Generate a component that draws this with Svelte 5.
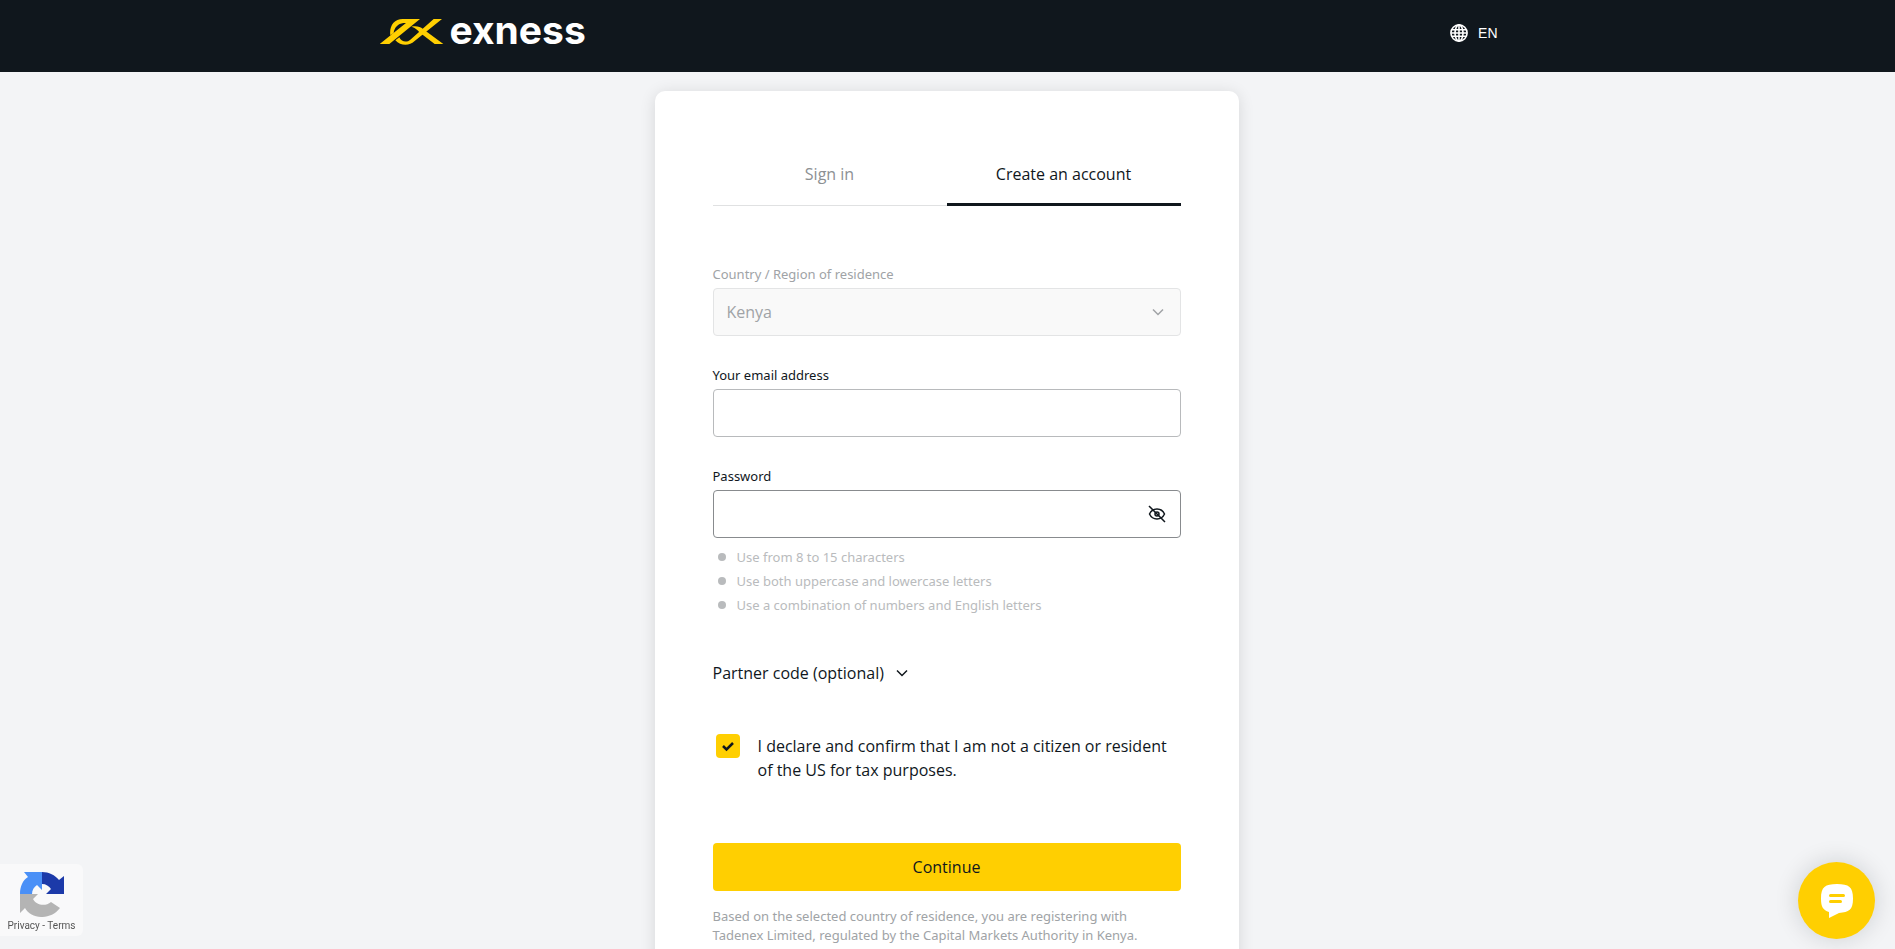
<script>
	let email = '';
	let password = '';
	let showPassword = false;
	let declared = true;

	const hints = [
		'Use from 8 to 15 characters',
		'Use both uppercase and lowercase letters',
		'Use a combination of numbers and English letters'
	];
</script>

<header>
	<div class="bar">
		<a class="logo" href="/" aria-label="exness">
			<svg viewBox="30 57 192 84" width="64" height="28" fill="#ffcf01">
				<path d="M150 60 L58 135 H29 L108 72 H100 C84 74 73 86 71 101 L61 109 C57 82 72 60 98 60 Z" />
				<path d="M216 60 L133 127 C119 141 92 142 76 124 L88 115 C95 130 111 131 121 122 L191 60 Z" />
				<path d="M124 83 C140 80 150 83 159 90 L220 135 H194 L150 101 C142 93 137 86 124 83 Z" />
			</svg>
			<span>exness</span>
		</a>
		<button class="lang">
			<svg viewBox="0 0 18 18" width="18" height="18" fill="none" stroke="currentColor" stroke-width="1.6">
				<circle cx="9" cy="9" r="8.1" />
				<ellipse cx="9" cy="9" rx="4" ry="8.1" />
				<path d="M9 1v16M1 9h16M2 5.7h14M2 12.3h14" />
			</svg>
			EN
		</button>
	</div>
</header>

<main>
	<div class="card">
		<nav>
			<a href="#signin">Sign in</a>
			<a href="#signup" class="active">Create an account</a>
		</nav>

		<form on:submit|preventDefault>
			<div class="field disabled">
				<label for="country">Country / Region of residence</label>
				<div class="control">
					<select id="country" disabled>
						<option>Kenya</option>
					</select>
					<svg class="chevron" viewBox="0 0 14 14" width="14" height="14">
						<path d="M2 4.5l5 5 5-5" />
					</svg>
				</div>
			</div>

			<div class="field">
				<label for="email">Your email address</label>
				<div class="control">
					<input id="email" type="email" bind:value={email} />
				</div>
			</div>

			<div class="field">
				<label for="password">Password</label>
				<div class="control">
					<input
						id="password"
						class="hovered"
						type={showPassword ? 'text' : 'password'}
						value={password}
						on:input={(e) => (password = e.target.value)}
					/>
					<button
						type="button"
						class="eye"
						aria-label="Show password"
						on:click={() => (showPassword = !showPassword)}
					>
						<svg viewBox="0 0 18 18" width="18" height="18">
							<path d="M1.5 9C3 5.8 5.8 4 9 4s6 1.8 7.5 5c-1.5 3.2-4.3 5-7.5 5S3 12.2 1.5 9z" />
							<circle cx="9" cy="9" r="2" />
							<path d="M1 1l16 16" />
						</svg>
					</button>
				</div>
				<ul>
					{#each hints as hint}
						<li>{hint}</li>
					{/each}
				</ul>
			</div>

			<button type="button" class="partner">
				Partner code (optional)
				<svg class="chevron" viewBox="0 0 14 14" width="14" height="14">
					<path d="M2 4.5l5 5 5-5" />
				</svg>
			</button>

			<label class="declare">
				<input type="checkbox" bind:checked={declared} />
				<span>I declare and confirm that I am not a citizen or resident of the US for tax purposes.</span>
			</label>

			<button class="submit">Continue</button>
			<p>
				Based on the selected country of residence, you are registering with Tadenex Limited, regulated
				by the Capital Markets Authority in Kenya.
			</p>
		</form>
	</div>
</main>

<aside class="captcha">
	<svg viewBox="0 0 44 45" width="44" height="45">
		<path fill="#4a90f7" d="M22 0v18l-5-5c-3 2-5 5-5 9H0C0 14 3 8 8 5L4 0z" />
		<path fill="#1c3aa9" d="M22 0c7 0 13 3 17 8l5-4v18H26l5-5c-2-3-5-5-9-5z" />
		<path fill="#b4b4b4" d="M0 22h18l-5 5c3 6 12 8 18 3l9 6C30 49 11 47 5 36l-5 5z" />
	</svg>
	<div><a href="#privacy">Privacy</a> - <a href="#terms">Terms</a></div>
</aside>

<button class="chat" aria-label="Chat">
	<svg viewBox="0 0 32 34" width="32" height="34">
		<path fill="#fff" d="M16 0c12 0 16 3 16 14.5S28 28 18 29l-10 5v-6C2 26 0 23 0 14.5 0 3 4 0 16 0z" />
		<path stroke="#ffcf01" stroke-width="3" stroke-linecap="round" d="M9.5 11.5h13M9.5 17.5h10" />
	</svg>
</button>

<style>
	:global(body) {
		background: #f3f4f6;
		color: #10171d;
		font-family: 'Open Sans', 'Segoe UI', sans-serif;
		font-size: 16px;
		line-height: 24px;
	}

	button,
	input,
	select {
		font: inherit;
		color: inherit;
	}

	button {
		padding: 0;
		border: 0;
		background: none;
		cursor: pointer;
	}

	a {
		color: inherit;
		text-decoration: none;
	}

	header {
		background: #10171d;
		color: #fff;
	}

	.bar {
		display: flex;
		justify-content: space-between;
		align-items: center;
		max-width: 1136px;
		height: 72px;
		margin: 0 auto;
	}

	.logo {
		display: flex;
		align-items: center;
		gap: 6px;
		padding-bottom: 8px;
		font: bold 39px/40px Inter, sans-serif;
	}

	.logo span {
		padding-bottom: 4px;
	}

	.lang {
		display: flex;
		align-items: center;
		gap: 10px;
		padding: 0 18px 6px 0;
		font-family: 'Liberation Sans', sans-serif;
		font-size: 14px;
	}

	main {
		padding: 19px 18px 40px 16px;
	}

	.card {
		box-sizing: border-box;
		max-width: 584px;
		margin: 0 auto;
		padding: 58px;
		border-radius: 10px;
		background: #fff;
		box-shadow: 0 2px 16px rgba(0, 0, 0, 0.12);
	}

	nav {
		display: flex;
		margin-bottom: 56px;
	}

	nav a {
		flex: 1;
		height: 56px;
		border-bottom: 1px solid #e0e1e2;
		line-height: 50px;
		text-align: center;
		color: #8c9093;
	}

	nav .active {
		height: 54px;
		border-bottom: 3px solid #10171d;
		color: #10171d;
	}

	form {
		display: flex;
		flex-direction: column;
	}

	.field {
		margin-bottom: 27px;
	}

	.field label {
		display: block;
		height: 26px;
		font-size: 13px;
	}

	.field label,
	ul,
	p {
		font-family: 'Noto Sans', 'Segoe UI', sans-serif;
	}

	.field.disabled,
	select {
		color: #a0a3a6;
	}

	.control {
		position: relative;
	}

	.control input,
	select {
		display: block;
		box-sizing: border-box;
		width: 100%;
		height: 48px;
		padding: 0 13px;
		border: 1px solid #b8babc;
		border-radius: 4px;
		background: #fff;
		outline: none;
	}

	.control input.hovered {
		border-color: #888b8e;
	}

	.control select {
		appearance: none;
		border-color: #e3e4e5;
		background: #f9f9f9;
		opacity: 1;
	}

	.chevron {
		fill: none;
		stroke: currentColor;
		stroke-width: 1.5;
	}

	.control .chevron {
		position: absolute;
		top: 17px;
		right: 16px;
	}

	.eye {
		position: absolute;
		top: 15px;
		right: 15px;
		height: 18px;
		line-height: 0;
	}

	.eye svg {
		fill: none;
		stroke: currentColor;
		stroke-width: 1.5;
	}

	ul {
		margin: 7px 0 0;
		padding: 0 0 0 5px;
		list-style: none;
		font-size: 13px;
		color: #b9bbbd;
	}

	li {
		display: flex;
		align-items: center;
		gap: 11px;
	}

	li::before {
		content: '';
		width: 8px;
		height: 8px;
		border-radius: 50%;
		background: #b9bbbd;
	}

	.partner {
		display: flex;
		align-items: center;
		gap: 11px;
		margin: 17px 0 49px;
	}

	.declare {
		display: flex;
		gap: 18px;
		margin-bottom: 61px;
		padding-left: 3px;
	}

	.declare input {
		flex: none;
		appearance: none;
		width: 24px;
		height: 24px;
		margin: 0;
		border-radius: 4px;
		background: #ffcf01;
	}

	.declare input:checked {
		background-image: url("data:image/svg+xml,%3Csvg xmlns='http://www.w3.org/2000/svg' viewBox='0 0 24 24'%3E%3Cpath d='M7 12l3.5 3.5L17 9' fill='none' stroke='%2310171d' stroke-width='2.5'/%3E%3C/svg%3E");
	}

	.submit {
		height: 48px;
		border-radius: 4px;
		background: #ffcf01;
	}

	p {
		margin: 16px 0 0;
		font-size: 13px;
		line-height: 19px;
		color: #a0a3a6;
	}

	.captcha {
		position: fixed;
		left: 0;
		bottom: 13px;
		display: flex;
		flex-direction: column;
		align-items: center;
		box-sizing: border-box;
		width: 83px;
		height: 72px;
		padding-top: 8px;
		border-radius: 0 6px 6px 0;
		background: #f9f9fa;
		font: 10px/18px Roboto, sans-serif;
		color: #555;
	}

	.chat {
		position: fixed;
		right: 20px;
		bottom: 10px;
		display: flex;
		justify-content: center;
		align-items: center;
		width: 77px;
		height: 77px;
		border-radius: 50%;
		background: #ffcf01;
		box-shadow: 0 0 24px rgba(16, 23, 29, 0.16);
	}
</style>
